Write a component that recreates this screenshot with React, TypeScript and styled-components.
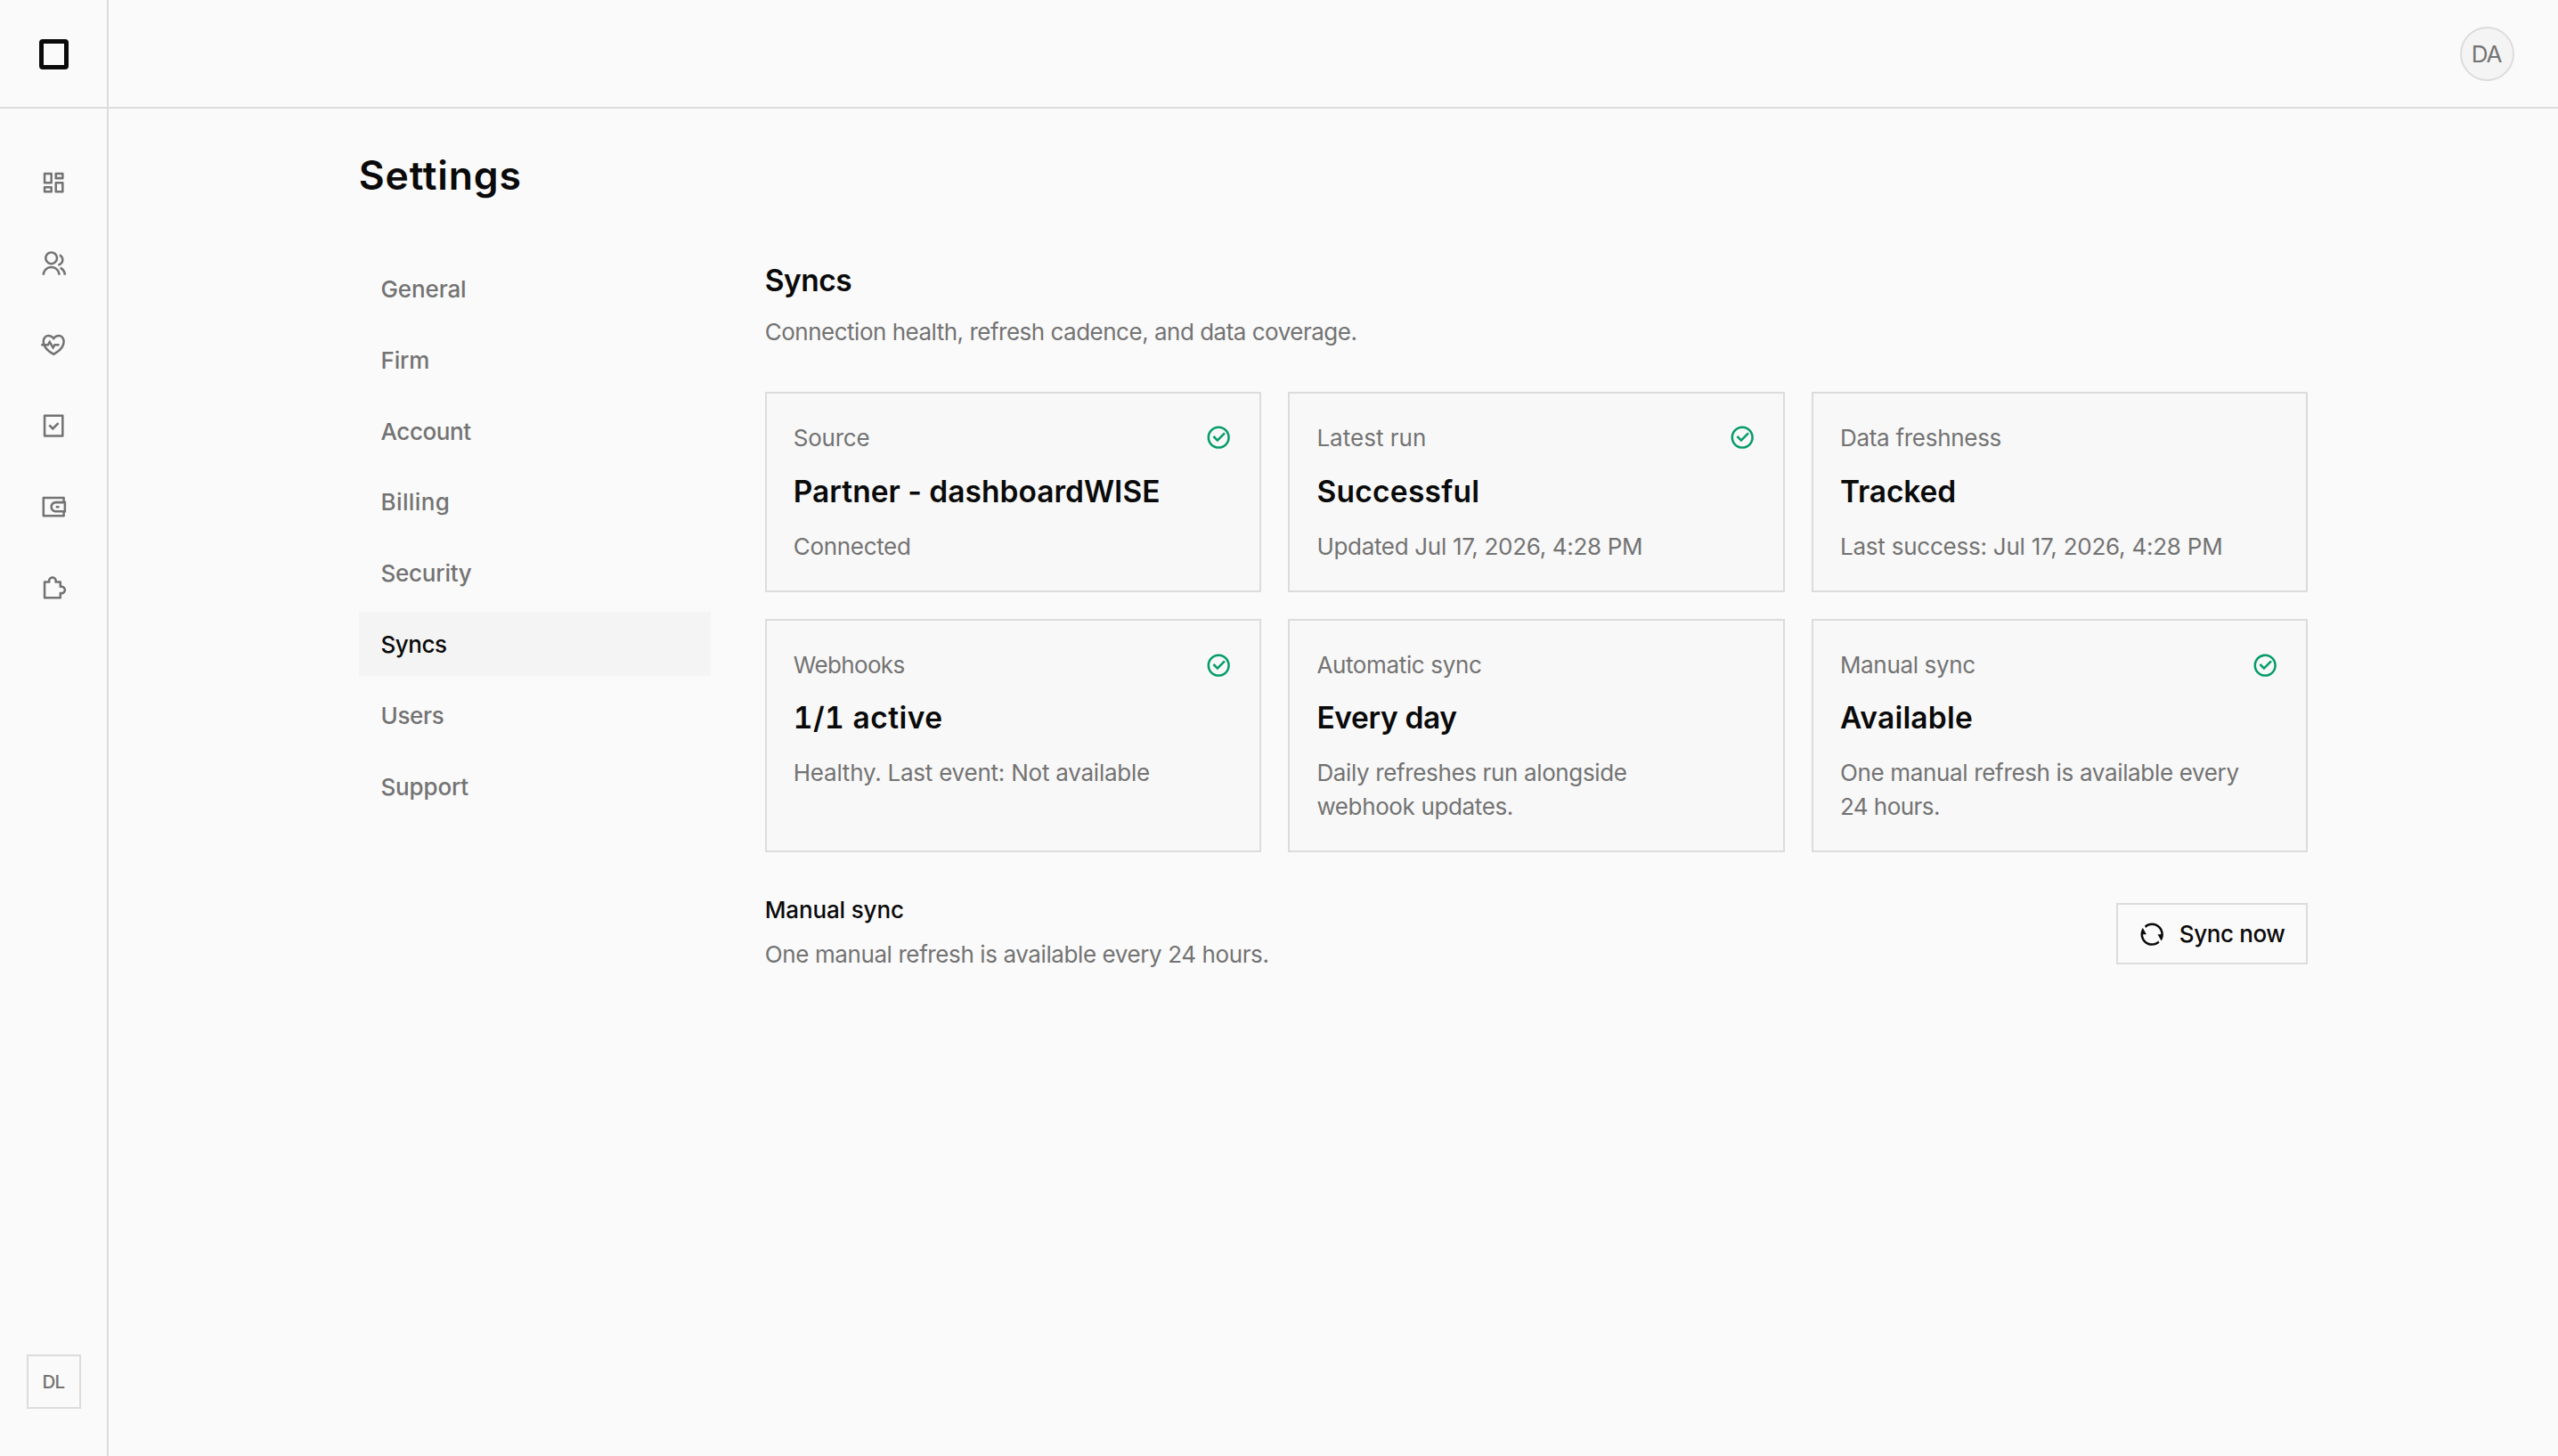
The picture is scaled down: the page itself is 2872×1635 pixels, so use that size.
import React from 'react';
import styled, { createGlobalStyle } from 'styled-components';
import {
  RiCheckboxCircleLine,
  RiDashboardLine,
  RiGroupLine,
  RiHeartPulseLine,
  RiPuzzleLine,
  RiRefreshLine,
  RiTaskLine,
  RiWallet3Line,
} from 'react-icons/ri';

const color = {
  page: '#fafafa',
  card: '#f8f8f8',
  muted: '#f4f4f4',
  line: '#dcdcdc',
  text: '#0a0a0a',
  subtle: '#737373',
  green: '#059c68',
};

const GlobalStyle = createGlobalStyle`
  *, *::before, *::after { box-sizing: border-box; }
  body {
    margin: 0;
    background: ${color.page};
    color: ${color.text};
    font-family: Inter, "Liberation Sans", sans-serif;
    font-size: 26px;
    line-height: 38px;
    -webkit-font-smoothing: antialiased;
  }
  h1, h2, h3, p { margin: 0; }
`;

const Shell = styled.div`
  display: flex;
  height: 1635px;
`;

const Sidebar = styled.aside`
  display: flex;
  flex-direction: column;
  align-items: center;
  flex: none;
  width: 122px;
  padding-bottom: 53px;
  border-right: 2px solid ${color.line};
`;

const LogoSlot = styled.div`
  display: grid;
  place-items: center;
  width: 100%;
  height: 122px;
  flex: none;
  padding-left: 1px;
  border-bottom: 2px solid ${color.line};
`;

const Logo = styled.div`
  width: 33px;
  height: 34px;
  margin-top: 2px;
  border: 5px solid ${color.text};
  border-radius: 4px;
`;

const IconNav = styled.nav`
  display: flex;
  flex-direction: column;
  gap: 60.8px;
  margin-top: 67.6px;
  flex: 1;
`;

const IconLink = styled.a`
  display: block;
  width: 30.4px;
  height: 30.4px;
  color: ${color.subtle};
  svg { display: block; width: 100%; height: 100%; }
`;

const Workspace = styled.div`
  display: grid;
  place-items: center;
  width: 61px;
  height: 61px;
  border: 2px solid ${color.line};
  color: ${color.subtle};
  font-size: 20.5px;
  font-weight: 500;
  letter-spacing: -0.7px;
`;

const Body = styled.div`
  flex: 1;
  min-width: 0;
`;

const TopBar = styled.header`
  display: flex;
  justify-content: flex-end;
  align-items: center;
  height: 122px;
  padding-right: 49px;
  border-bottom: 2px solid ${color.line};
`;

const Avatar = styled.div`
  display: grid;
  place-items: center;
  width: 61px;
  height: 61px;
  margin-top: 1px;
  padding-right: 2px;
  border: 2px solid ${color.line};
  border-radius: 50%;
  background: ${color.muted};
  color: ${color.subtle};
  letter-spacing: -1.2px;
`;

const Main = styled.main`
  width: 2188.4px;
  margin: 0 auto;
  padding-top: 45px;
`;

const Title = styled.h1`
  font-size: 44.5px;
  line-height: 60px;
  font-weight: 600;
  letter-spacing: 0.8px;
`;

const Columns = styled.div`
  display: flex;
  gap: 60.8px;
  margin-top: 61px;
`;

const SideNav = styled.nav`
  display: flex;
  flex-direction: column;
  gap: 7.6px;
  flex: none;
  width: 395.2px;
`;

const SideLink = styled.a<{ $active?: boolean; $track: number }>`
  display: flex;
  align-items: center;
  height: 72.2px;
  padding: 2px 0 0 24.7px;
  background: ${(p) => (p.$active ? color.muted : 'transparent')};
  color: ${(p) => (p.$active ? color.text : color.subtle)};
  font-weight: 500;
  letter-spacing: ${(p) => p.$track}px;
`;

const Content = styled.section`
  flex: 1;
  min-width: 0;
`;

const Heading = styled.h2<{ $track: number; $tabular?: boolean }>`
  font-size: 33.5px;
  line-height: 53px;
  font-weight: 600;
  letter-spacing: ${(p) => p.$track}px;
  font-variant-numeric: ${(p) => (p.$tabular ? 'tabular-nums' : 'normal')};
`;

const Copy = styled.p<{ $track: number }>`
  color: ${color.subtle};
  letter-spacing: ${(p) => p.$track - 0.04}px;
`;

const Intro = styled.div`
  display: grid;
  gap: 12px;
  padding-top: 1px;
  margin-bottom: 48px;
`;

const CardGrid = styled.div`
  display: grid;
  grid-template-columns: repeat(3, 1fr);
  gap: 30.4px;
`;

const Card = styled.article`
  padding: 31px 30.4px 30px 30px;
  border: 2px solid ${color.line};
  background: ${color.card};
`;

const CardTop = styled.div<{ $gap: number }>`
  display: flex;
  justify-content: space-between;
  align-items: center;
  margin-bottom: ${(p) => p.$gap}px;
`;

const CardDetail = styled.div`
  margin-top: 16px;
`;

const Status = styled(RiCheckboxCircleLine)`
  width: 30.4px;
  height: 30.4px;
  margin-top: -1px;
  color: ${color.green};
`;

const ManualRow = styled.div`
  display: flex;
  justify-content: space-between;
  align-items: flex-start;
  margin-top: 46px;
`;

const ManualText = styled.div`
  display: grid;
  gap: 12px;
`;

const Subheading = styled.h3`
  font-size: 26px;
  line-height: 38px;
  font-weight: 500;
  letter-spacing: -0.15px;
`;

const SyncButton = styled.button`
  display: flex;
  align-items: center;
  gap: 15.2px;
  width: 215px;
  height: 69px;
  margin-top: 11px;
  padding: 0 0 0 23px;
  border: 2px solid ${color.line};
  background: ${color.page};
  color: ${color.text};
  font: 500 26px/38px Inter, "Liberation Sans", sans-serif;
  letter-spacing: -0.39px;
  white-space: nowrap;
  svg { width: 30.4px; height: 30.4px; flex: none; }
`;

const railIcons = [RiDashboardLine, RiGroupLine, RiHeartPulseLine, RiTaskLine, RiWallet3Line, RiPuzzleLine];

const sections = [
  { name: 'General', track: -0.12 },
  { name: 'Firm', track: -0.15 },
  { name: 'Account', track: -0.42 },
  { name: 'Billing', track: 0.4 },
  { name: 'Security', track: -0.24 },
  { name: 'Syncs', track: -0.47 },
  { name: 'Users', track: -0.35 },
  { name: 'Support', track: -0.16 },
];

type Line = [text: string, track: number];
type CardData = { label: Line; value: Line; detail: Line[]; ok?: boolean; tabular?: boolean };

const cards: CardData[] = [
  { label: ['Source', -0.2], value: ['Partner - dashboardWISE', 0.02], detail: [['Connected', -0.28]], ok: true },
  { label: ['Latest run', 0.06], value: ['Successful', 0.28], detail: [['Updated Jul 17, 2026, 4:28 PM', -0.27]], ok: true },
  { label: ['Data freshness', -0.25], value: ['Tracked', -0.15], detail: [['Last success: Jul 17, 2026, 4:28 PM', -0.19]] },
  { label: ['Webhooks', -0.6], value: ['1/1 active', 0.45], detail: [['Healthy. Last event: Not available', -0.19]], ok: true, tabular: true },
  { label: ['Automatic sync', -0.32], value: ['Every day', -0.34], detail: [['Daily refreshes run alongside', -0.32], ['webhook updates.', -0.33]] },
  { label: ['Manual sync', -0.3], value: ['Available', 0.23], detail: [['One manual refresh is available every', -0.3], ['24 hours.', -0.52]], ok: true },
];

export default function App() {
  return (
    <>
      <GlobalStyle />
      <Shell>
        <Sidebar>
          <LogoSlot>
            <Logo />
          </LogoSlot>
          <IconNav>
            {railIcons.map((Icon, i) => (
              <IconLink key={i}>
                <Icon />
              </IconLink>
            ))}
          </IconNav>
          <Workspace>DL</Workspace>
        </Sidebar>
        <Body>
          <TopBar>
            <Avatar>DA</Avatar>
          </TopBar>
          <Main>
            <Title>Settings</Title>
            <Columns>
              <SideNav>
                {sections.map((s) => (
                  <SideLink key={s.name} $track={s.track} $active={s.name === 'Syncs'}>
                    {s.name}
                  </SideLink>
                ))}
              </SideNav>
              <Content>
                <Intro>
                  <Heading $track={-0.53}>Syncs</Heading>
                  <Copy $track={-0.46}>Connection health, refresh cadence, and data coverage.</Copy>
                </Intro>
                <CardGrid>
                  {cards.map((c, i) => (
                    <Card key={c.label[0]}>
                      <CardTop $gap={i < 3 ? 15 : 14}>
                        <Copy $track={c.label[1]}>{c.label[0]}</Copy>
                        {c.ok && <Status />}
                      </CardTop>
                      <Heading as="h3" $track={c.value[1]} $tabular={c.tabular}>
                        {c.value[0]}
                      </Heading>
                      <CardDetail>
                        {c.detail.map(([text, track]) => (
                          <Copy key={text} $track={track}>
                            {text}
                          </Copy>
                        ))}
                      </CardDetail>
                    </Card>
                  ))}
                </CardGrid>
                <ManualRow>
                  <ManualText>
                    <Subheading>Manual sync</Subheading>
                    <Copy $track={-0.36}>One manual refresh is available every 24 hours.</Copy>
                  </ManualText>
                  <SyncButton>
                    <RiRefreshLine />
                    Sync now
                  </SyncButton>
                </ManualRow>
              </Content>
            </Columns>
          </Main>
        </Body>
      </Shell>
    </>
  );
}
